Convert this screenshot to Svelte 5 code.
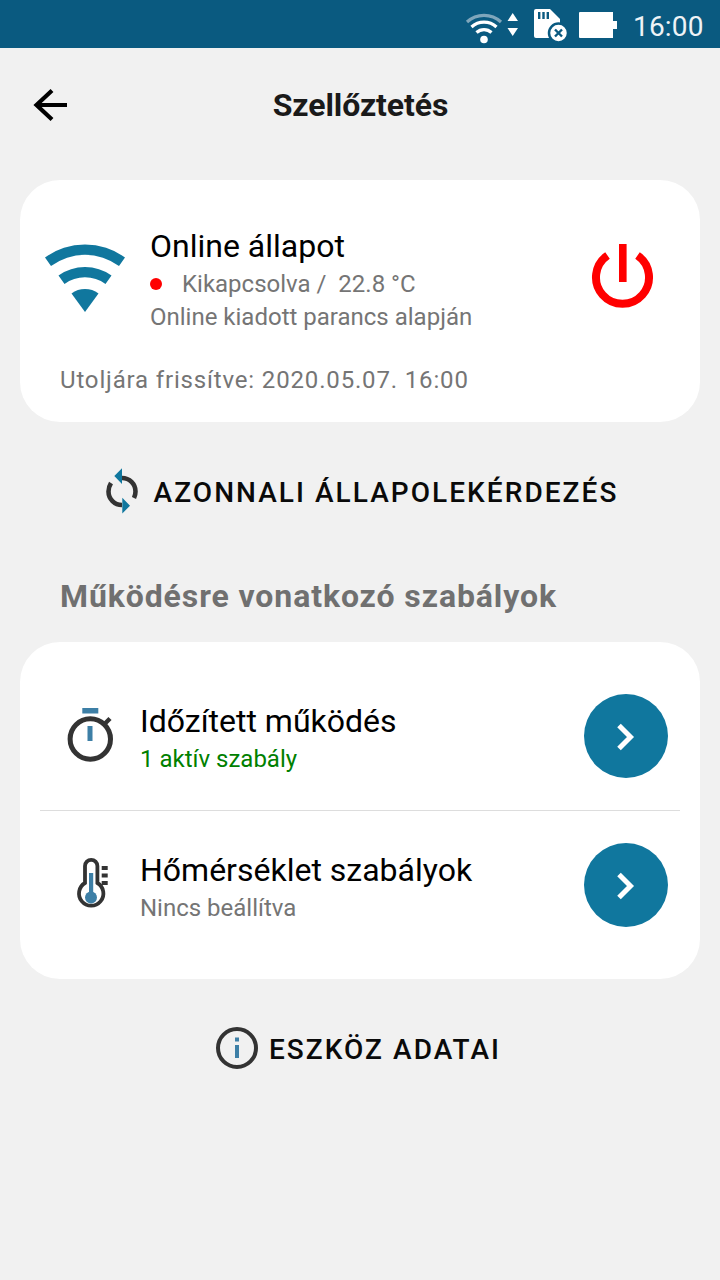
<script>
  const rules = [
    { title: 'Időzített működés', sub: '1 aktív szabály', active: true, icon: 'timer' },
    { title: 'Hőmérséklet szabályok', sub: 'Nincs beállítva', active: false, icon: 'thermo' }
  ];
</script>

<div class="page">
  <div class="status">
    <svg class="st-wifi" viewBox="464 4 40 38">
      <path d="M467 18 A25 25 0 0 1 501 18" fill="none" stroke="#7fa6bb" stroke-width="3.2" />
      <path d="M471.5 23 A18.5 18.5 0 0 1 496.5 23" fill="none" stroke="#fff" stroke-width="3.2" />
      <path d="M476.5 28.5 A11 11 0 0 1 491.5 28.5" fill="none" stroke="#fff" stroke-width="3.2" />
      <circle cx="484" cy="35.5" r="3.8" fill="#fff" />
    </svg>
    <svg class="st-arrows" viewBox="507 12 12 25">
      <path d="M512.7 13 L518 21 H507.5 Z M512.7 36 L518 28 H507.5 Z" fill="#fff" />
    </svg>
    <svg class="st-sd" viewBox="533 8 36 36">
      <path d="M534 11 Q534 9 536 9 H550 L560 19 V36 Q560 38 558 38 H536 Q534 38 534 36 Z" fill="#fff" />
      <path d="M538 12 h2.4 v7 h-2.4 z M542.3 12 h2.4 v7 h-2.4 z M546.6 12 h2.4 v7 h-2.4 z" fill="#0a5a80" />
      <circle cx="558.5" cy="33" r="9.5" fill="#fff" stroke="#0a5a80" stroke-width="2.5" />
      <path d="M555 29.5 L562 36.5 M562 29.5 L555 36.5" stroke="#0a5a80" stroke-width="2.4" />
    </svg>
    <svg class="st-bat" viewBox="578 11 40 28">
      <path d="M580 12 H613 V21 H617 V29 H613 V38 H580 Q579 38 579 37 V13 Q579 12 580 12 Z" fill="#fff" />
    </svg>
    <span class="time">16:00</span>
  </div>

  <header class="head">
    <svg class="back" viewBox="30 86 40 38">
      <path d="M67 105 H36 M52 90.5 L36.5 105 L52 119.5" fill="none" stroke="#000" stroke-width="4.2" />
    </svg>
    <h1>Szellőztetés</h1>
  </header>

  <section class="card state">
    <div class="state-top">
      <svg class="wifi" viewBox="40 240 90 76">
        <path d="M45 257.5 A68 68 0 0 1 125 257.5 L119 266 A57 57 0 0 0 51 266 Z" fill="#10779e" />
        <path d="M58.5 275.5 A45.5 45.5 0 0 1 111.5 275.5 L105.5 284 A35 35 0 0 0 64.5 284 Z" fill="#10779e" />
        <path d="M71.5 293.5 A23 23 0 0 1 98.5 293.5 L85 312 Z" fill="#10779e" />
      </svg>
      <div class="state-text">
        <div class="state-title">Online állapot</div>
        <div class="state-line"><i class="dot"></i><span>Kikapcsolva /&nbsp; 22.8 °C</span></div>
        <div class="state-note">Online kiadott parancs alapján</div>
      </div>
      <svg class="power" viewBox="590 240 66 70">
        <path d="M607.5 255.5 A26.5 26.5 0 1 0 637.5 255.5" fill="none" stroke="#f00" stroke-width="8" />
        <rect x="619" y="244" width="7.6" height="38" fill="#f00" />
      </svg>
    </div>
    <div class="updated">Utoljára frissítve: 2020.05.07. 16:00</div>
  </section>

  <div class="action refresh">
    <svg class="sync" viewBox="100 467 40 50">
      <path d="M121 478 A13.5 13.5 0 0 1 134.5 491.5 Q134.5 495 133 498" fill="none" stroke="#333" stroke-width="4.6" />
      <path d="M121 505 A13.5 13.5 0 0 1 107.5 491.5 Q107.5 487 110 483" fill="none" stroke="#333" stroke-width="4.6" />
      <path d="M113.3 476 L121 468.3 V484 Z M129 505.7 L121.3 497.7 V513.5 Z" fill="#10779e" />
    </svg>
    <span>AZONNALI ÁLLAPOLEKÉRDEZÉS</span>
  </div>

  <h2>Működésre vonatkozó szabályok</h2>

  <section class="card rules">
    {#each rules as r}
      <div class="rule">
        <div class="rule-icon">
          {#if r.icon === 'timer'}
            <svg class="ico" viewBox="60 704 60 64">
              <rect x="82.3" y="708" width="16" height="5.5" fill="#3d7fa6" />
              <circle cx="90.3" cy="739" r="20.2" fill="none" stroke="#333" stroke-width="5" />
              <path d="M105 723.5 L110 718.5" stroke="#333" stroke-width="4.5" />
              <rect x="87.5" y="726" width="5" height="15" fill="#3d7fa6" />
            </svg>
          {:else}
            <svg class="ico" viewBox="60 853 60 64">
              <path d="M85 883 V866 A6.2 6.2 0 0 1 97.4 866 V883 A12.2 12.2 0 1 1 85 883 Z" fill="none" stroke="#333" stroke-width="3.8" />
              <rect x="89" y="873" width="4.2" height="22" fill="#3d7fa6" />
              <circle cx="91" cy="897.5" r="6" fill="#3d7fa6" />
              <path d="M101.7 866 h6 v4 h-6 z M101.7 873.5 h6 v4 h-6 z M101.7 881 h6 v4 h-6 z" fill="#333" />
            </svg>
          {/if}
        </div>
        <div class="rule-text">
          <div class="rule-title">{r.title}</div>
          <div class="rule-sub" class:on={r.active}>{r.sub}</div>
        </div>
        <div class="go">
          <svg viewBox="0 0 84 84">
            <path d="M35 31.5 L46.5 43 L35 54.5" fill="none" stroke="#fff" stroke-width="5" />
          </svg>
        </div>
      </div>
    {/each}
  </section>

  <div class="action device">
    <svg class="info" viewBox="214 1026 46 46">
      <circle cx="237" cy="1048" r="19" fill="none" stroke="#333" stroke-width="4" />
      <rect x="235" y="1037.5" width="4" height="4" fill="#3d7fa6" />
      <rect x="235" y="1045" width="4" height="13" fill="#3d7fa6" />
    </svg>
    <span>ESZKÖZ ADATAI</span>
  </div>
</div>

<style>
  :global(body) {
    margin: 0;
    background: #f1f1f1;
  }
  .page {
    width: 720px;
    height: 1280px;
    background: #f1f1f1;
    font-family: Roboto, sans-serif;
    color: #000;
    overflow: hidden;
  }
  svg {
    display: block;
    flex: none;
  }
  .status {
    height: 48px;
    background: #0a5a80;
    display: flex;
    align-items: center;
    box-sizing: border-box;
    padding-left: 464px;
  }
  .st-wifi { width: 40px; height: 38px; margin-top: 6px; margin-right: 3px; }
  .st-arrows { width: 12px; height: 25px; margin-right: 14px; }
  .st-sd { width: 36px; height: 36px; margin-top: 4px; margin-right: 9px; }
  .st-bat { width: 40px; height: 28px; margin-top: 2px; margin-right: 15px; }
  .time {
    font-size: 28px;
    line-height: 48px;
    margin-top: 5px;
    letter-spacing: 0.2px;
    color: #eef3f6;
  }
  .head {
    height: 114px;
    position: relative;
    display: flex;
    align-items: center;
    justify-content: center;
  }
  .back {
    position: absolute;
    left: 30px;
    top: 38px;
    width: 40px;
    height: 38px;
  }
  h1 {
    margin: 0 0 0 1px;
    font-size: 32px;
    font-weight: 700;
    letter-spacing: -0.1px;
    color: #1a1a1a;
  }
  .card {
    margin: 18px 20px 0;
    background: #fff;
    border-radius: 40px;
  }
  .state {
    box-sizing: border-box;
    height: 242px;
    padding: 48px 44px 0 20px;
  }
  .state-top {
    display: flex;
    align-items: flex-start;
  }
  .wifi {
    width: 90px;
    height: 76px;
    margin-top: 12px;
    margin-right: 20px;
  }
  .state-text {
    flex: 1;
  }
  .state-title {
    font-size: 32px;
    line-height: 36px;
    margin-bottom: 2px;
  }
  .state-line {
    display: flex;
    align-items: center;
    font-size: 24px;
    line-height: 36px;
    color: #757575;
  }
  .dot {
    width: 12px;
    height: 12px;
    border-radius: 50%;
    background: #f00;
    margin-right: 20px;
  }
  .state-note {
    font-size: 24px;
    line-height: 30px;
    color: #757575;
  }
  .power {
    width: 66px;
    height: 70px;
    margin-top: 12px;
  }
  .updated {
    margin: 33px 0 0 20px;
    font-size: 24px;
    line-height: 30px;
    letter-spacing: 0.84px;
    color: #757575;
  }
  .action {
    display: flex;
    align-items: center;
    justify-content: center;
    font-size: 28px;
    font-weight: 500;
    letter-spacing: 2.05px;
    color: #0a0a0a;
  }
  .refresh {
    margin-top: 45px;
    height: 50px;
    padding-right: 1px;
  }
  .sync {
    width: 40px;
    height: 50px;
    margin-right: 13px;
  }
  h2 {
    margin: 59px 0 0 60px;
    font-size: 32px;
    line-height: 40px;
    font-weight: 700;
    letter-spacing: 0.9px;
    color: #707070;
  }
  .rules {
    margin-top: 26px;
    padding: 20px;
  }
  .rule {
    height: 148px;
    display: flex;
    align-items: center;
    padding-right: 12px;
  }
  .rule + .rule {
    border-top: 1px solid #ddd;
  }
  .rule-icon {
    width: 60px;
    margin-left: 20px;
    margin-right: 20px;
  }
  .ico {
    width: 60px;
    height: 64px;
  }
  .rule-text {
    flex: 1;
    padding-top: 6px;
  }
  .rule-title {
    font-size: 32px;
    line-height: 40px;
  }
  .rule-sub {
    font-size: 24px;
    line-height: 36px;
    color: #757575;
  }
  .rule-sub.on {
    color: #008000;
  }
  .go {
    width: 84px;
    height: 84px;
    border-radius: 50%;
    background: #10779e;
  }
  .go svg {
    width: 84px;
    height: 84px;
  }
  .device {
    margin-top: 47px;
    height: 46px;
    padding-right: 5px;
  }
  .info {
    width: 46px;
    height: 46px;
    margin-right: 9px;
  }
</style>
